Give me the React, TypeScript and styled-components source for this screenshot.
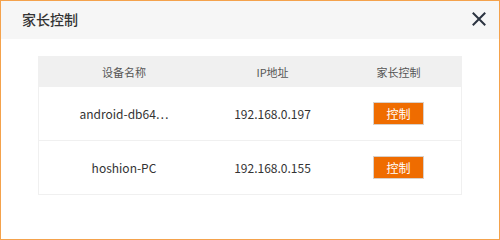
import React from "react";
import styled, { createGlobalStyle } from "styled-components";

interface Device {
  name: string;
  ip: string;
}

const devices: Device[] = [
  { name: "android-db64…", ip: "192.168.0.197" },
  { name: "hoshion-PC", ip: "192.168.0.155" },
];

const GlobalStyle = createGlobalStyle`
  html, body {
    margin: 0;
    padding: 0;
    background: #fff;
  }
  body {
    font-family: "Noto Sans CJK SC", "Noto Sans", sans-serif;
  }
`;

const App: React.FC = () => {
  return (
    <>
      <GlobalStyle />
      <Dialog>
        <Header>
          <Title>家长控制</Title>
          <CloseButton aria-label="close">
            <svg width="14" height="14" viewBox="0 0 14 14">
              <path
                d="M1.5 1.5 L12.5 12.5 M12.5 1.5 L1.5 12.5"
                stroke="#2b3340"
                strokeWidth="2"
                strokeLinecap="square"
              />
            </svg>
          </CloseButton>
        </Header>
        <Body>
          <Table>
            <HeadRow>
              <HeadCell>设备名称</HeadCell>
              <HeadCell>IP地址</HeadCell>
              <HeadCell>家长控制</HeadCell>
            </HeadRow>
            {devices.map((d) => (
              <Row key={d.ip}>
                <Cell>{d.name}</Cell>
                <Cell>{d.ip}</Cell>
                <Cell>
                  <ControlButton>控制</ControlButton>
                </Cell>
              </Row>
            ))}
          </Table>
        </Body>
      </Dialog>
    </>
  );
};

export default App;

const Dialog = styled.div`
  width: 500px;
  height: 240px;
  box-sizing: border-box;
  border: 1px solid #f4a24c;
  background: #fff;
  display: flex;
  flex-direction: column;
`;
const Header = styled.div`
  height: 38px;
  box-sizing: border-box;
  background: #f6f6f6;
  display: flex;
  align-items: center;
  justify-content: space-between;
  padding: 0 13px 3px 21px;
`;
const Title = styled.span`
  font-size: 14px;
  color: #333;
  font-weight: 500;
`;
const CloseButton = styled.button`
  border: none;
  background: none;
  padding: 0;
  display: flex;
  cursor: pointer;
`;
const Body = styled.div`
  padding: 17px 37px 0;
`;
const Table = styled.div`
  width: 424px;
  box-sizing: border-box;
  border: 1px solid #f0f0f0;
`;
const HeadRow = styled.div`
  display: grid;
  grid-template-columns: 170px 127px 1fr;
  height: 29px;
  background: #f0f0f0;
`;
const HeadCell = styled.div`
  display: flex;
  align-items: center;
  justify-content: center;
  font-size: 11px;
  color: #555;
`;
const Row = styled.div`
  display: grid;
  grid-template-columns: 170px 127px 1fr;
  height: 53px;
  border-top: 1px solid #f0f0f0;
`;
const Cell = styled.div`
  display: flex;
  align-items: center;
  justify-content: center;
  font-size: 12px;
  color: #333;
`;
const ControlButton = styled.button`
  width: 51px;
  height: 23px;
  box-sizing: border-box;
  border: 1px solid #d9d0c8;
  background: #ef6c00;
  color: #fff;
  font-family: inherit;
  font-size: 12px;
  padding: 0;
  cursor: pointer;
`;
